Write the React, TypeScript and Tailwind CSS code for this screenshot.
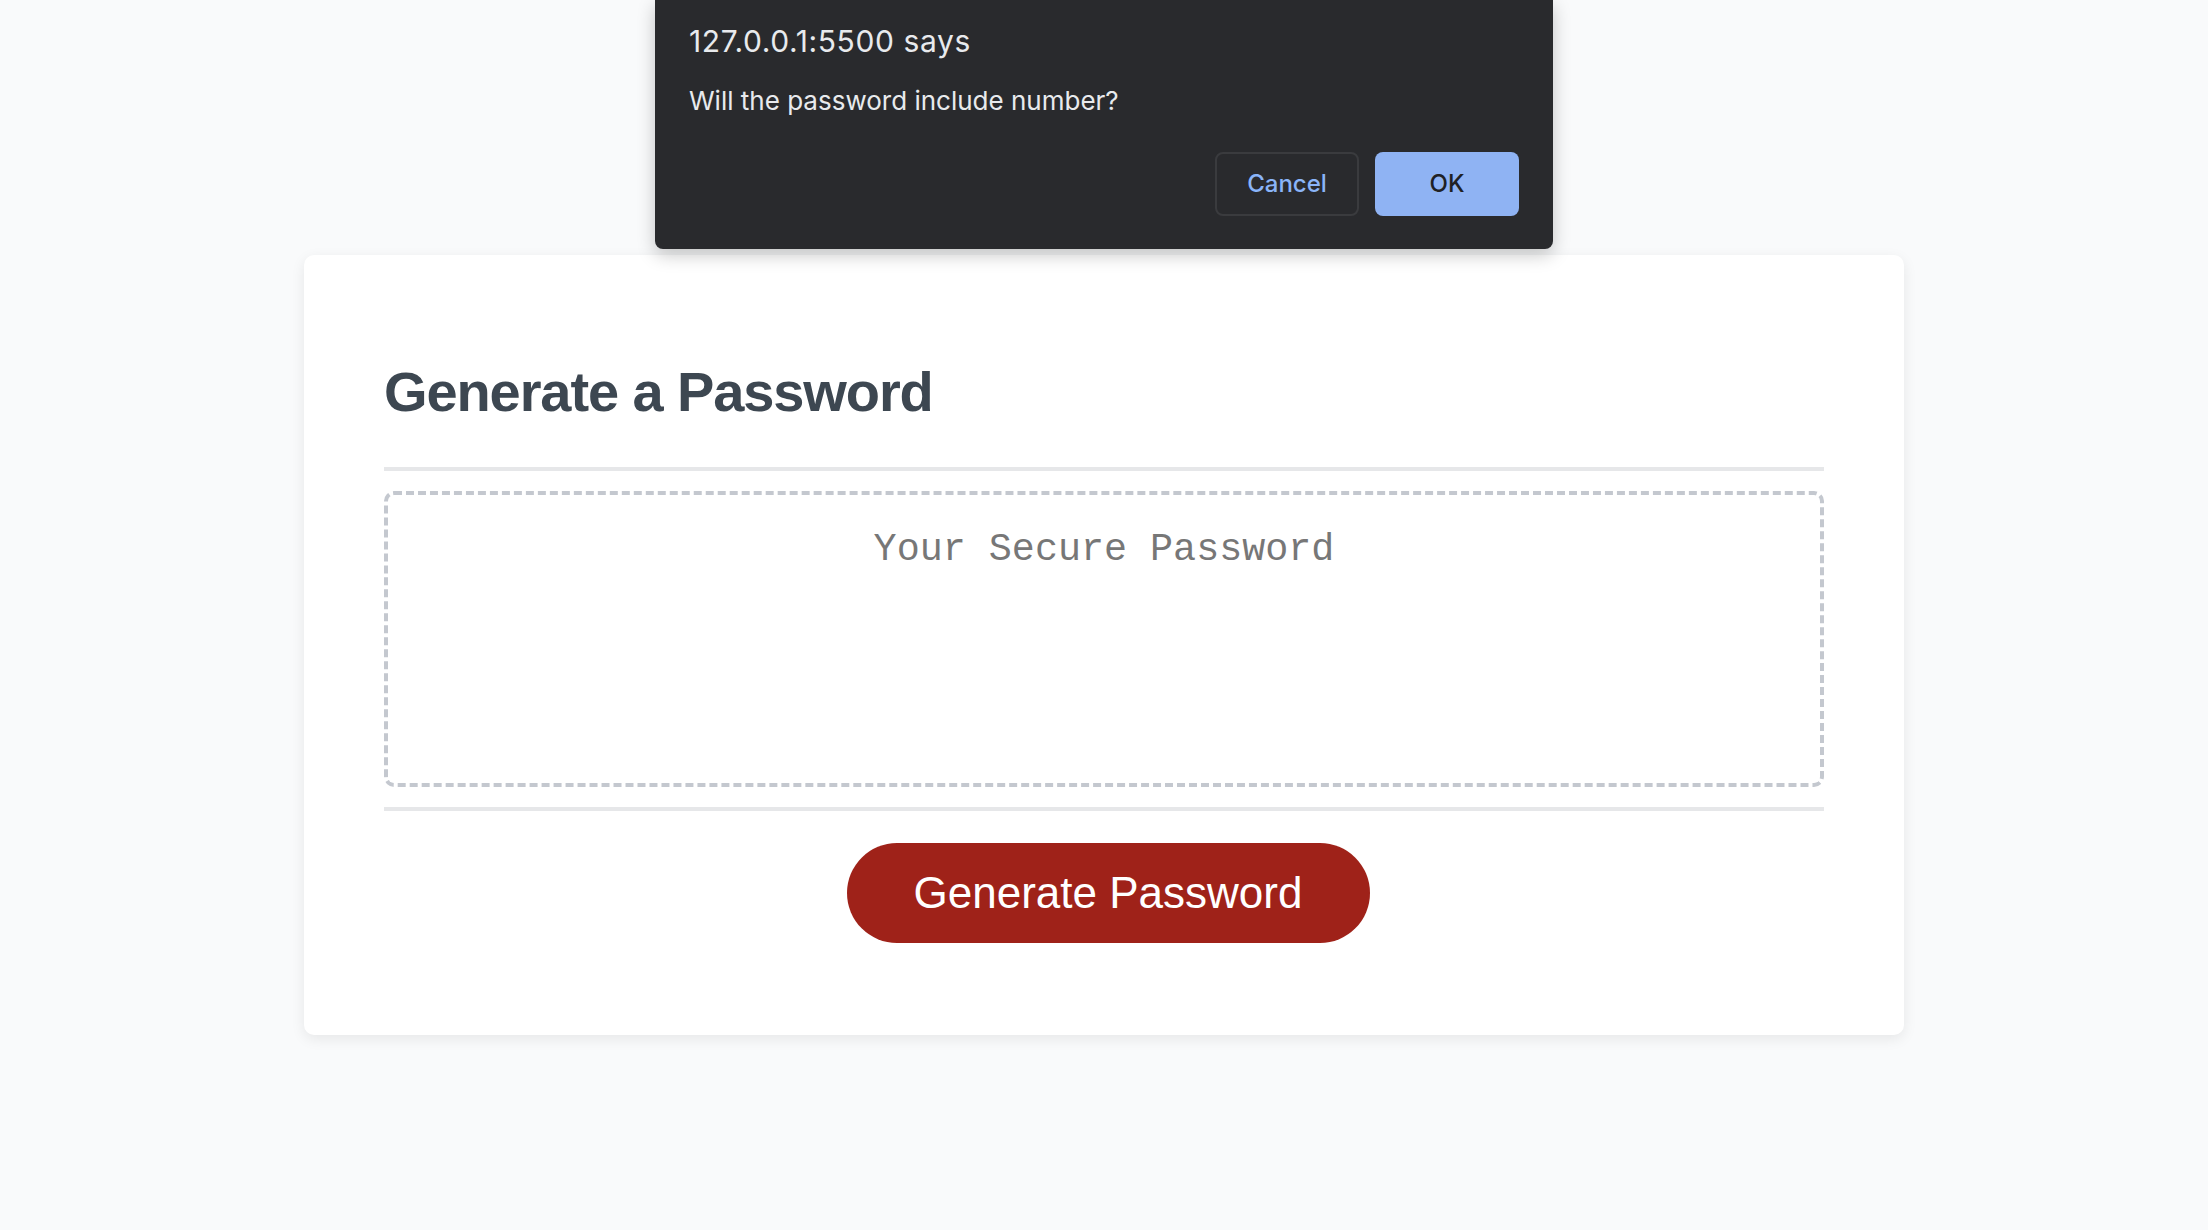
import React from "react";

function AlertDialog() {
  return (
    <div className="absolute left-[655px] top-0 w-[898px] h-[249px] bg-[#292a2d] rounded-b-[8px] shadow-[0_6px_18px_rgba(0,0,0,0.22)] px-[34px] pt-[23px] font-['Inter',sans-serif] text-[#e8eaed]">
      <div className="text-[30px] leading-[36px] tracking-[0.6px]">127.0.0.1:5500 says</div>
      <div className="mt-[26px] text-[26px] leading-[32px]">Will the password include number?</div>
      <div className="mt-[35px] flex justify-end gap-[16px]">
        <button className="w-[144px] h-[64px] rounded-[8px] border-2 border-[#3a3b3e] text-[24px] font-medium text-[#8ab4f8]">
          Cancel
        </button>
        <button className="w-[144px] h-[64px] rounded-[8px] bg-[#8fb3f3] text-[24px] font-medium text-[#202124]">
          OK
        </button>
      </div>
    </div>
  );
}

export default function App() {
  return (
    <div className="relative min-h-[1230px] bg-[#f9fafb] pt-[255px] font-['Liberation_Sans',Arial,sans-serif]">
      <div className="mx-auto w-[1600px] bg-white rounded-[10px] shadow-[0_4px_14px_rgba(0,0,0,0.08)] px-[80px] pt-[103px] pb-[92px]">
        <h2 className="text-[56px] leading-[67px] font-bold tracking-[-1.1px] text-[#3d4751]">Generate a Password</h2>
        <div className="mt-[42px] h-[4px] bg-[#e6e7e9]" />
        <div className="mt-[20px] h-[296px] rounded-[10px] border-4 border-dashed border-[#c4c8cf] pt-[33px] text-center">
          <span className="font-['Liberation_Mono','Courier_New',monospace] text-[38.4px] leading-[44px] text-[#777777]">
            Your Secure Password
          </span>
        </div>
        <div className="mt-[20px] h-[4px] bg-[#e6e7e9]" />
        <div className="mt-[32px] flex justify-center pl-[8px]">
          <button className="w-[523px] h-[100px] rounded-full bg-[#9f2219] text-white text-[44px] leading-none">
            Generate Password
          </button>
        </div>
      </div>
      <AlertDialog />
    </div>
  );
}
